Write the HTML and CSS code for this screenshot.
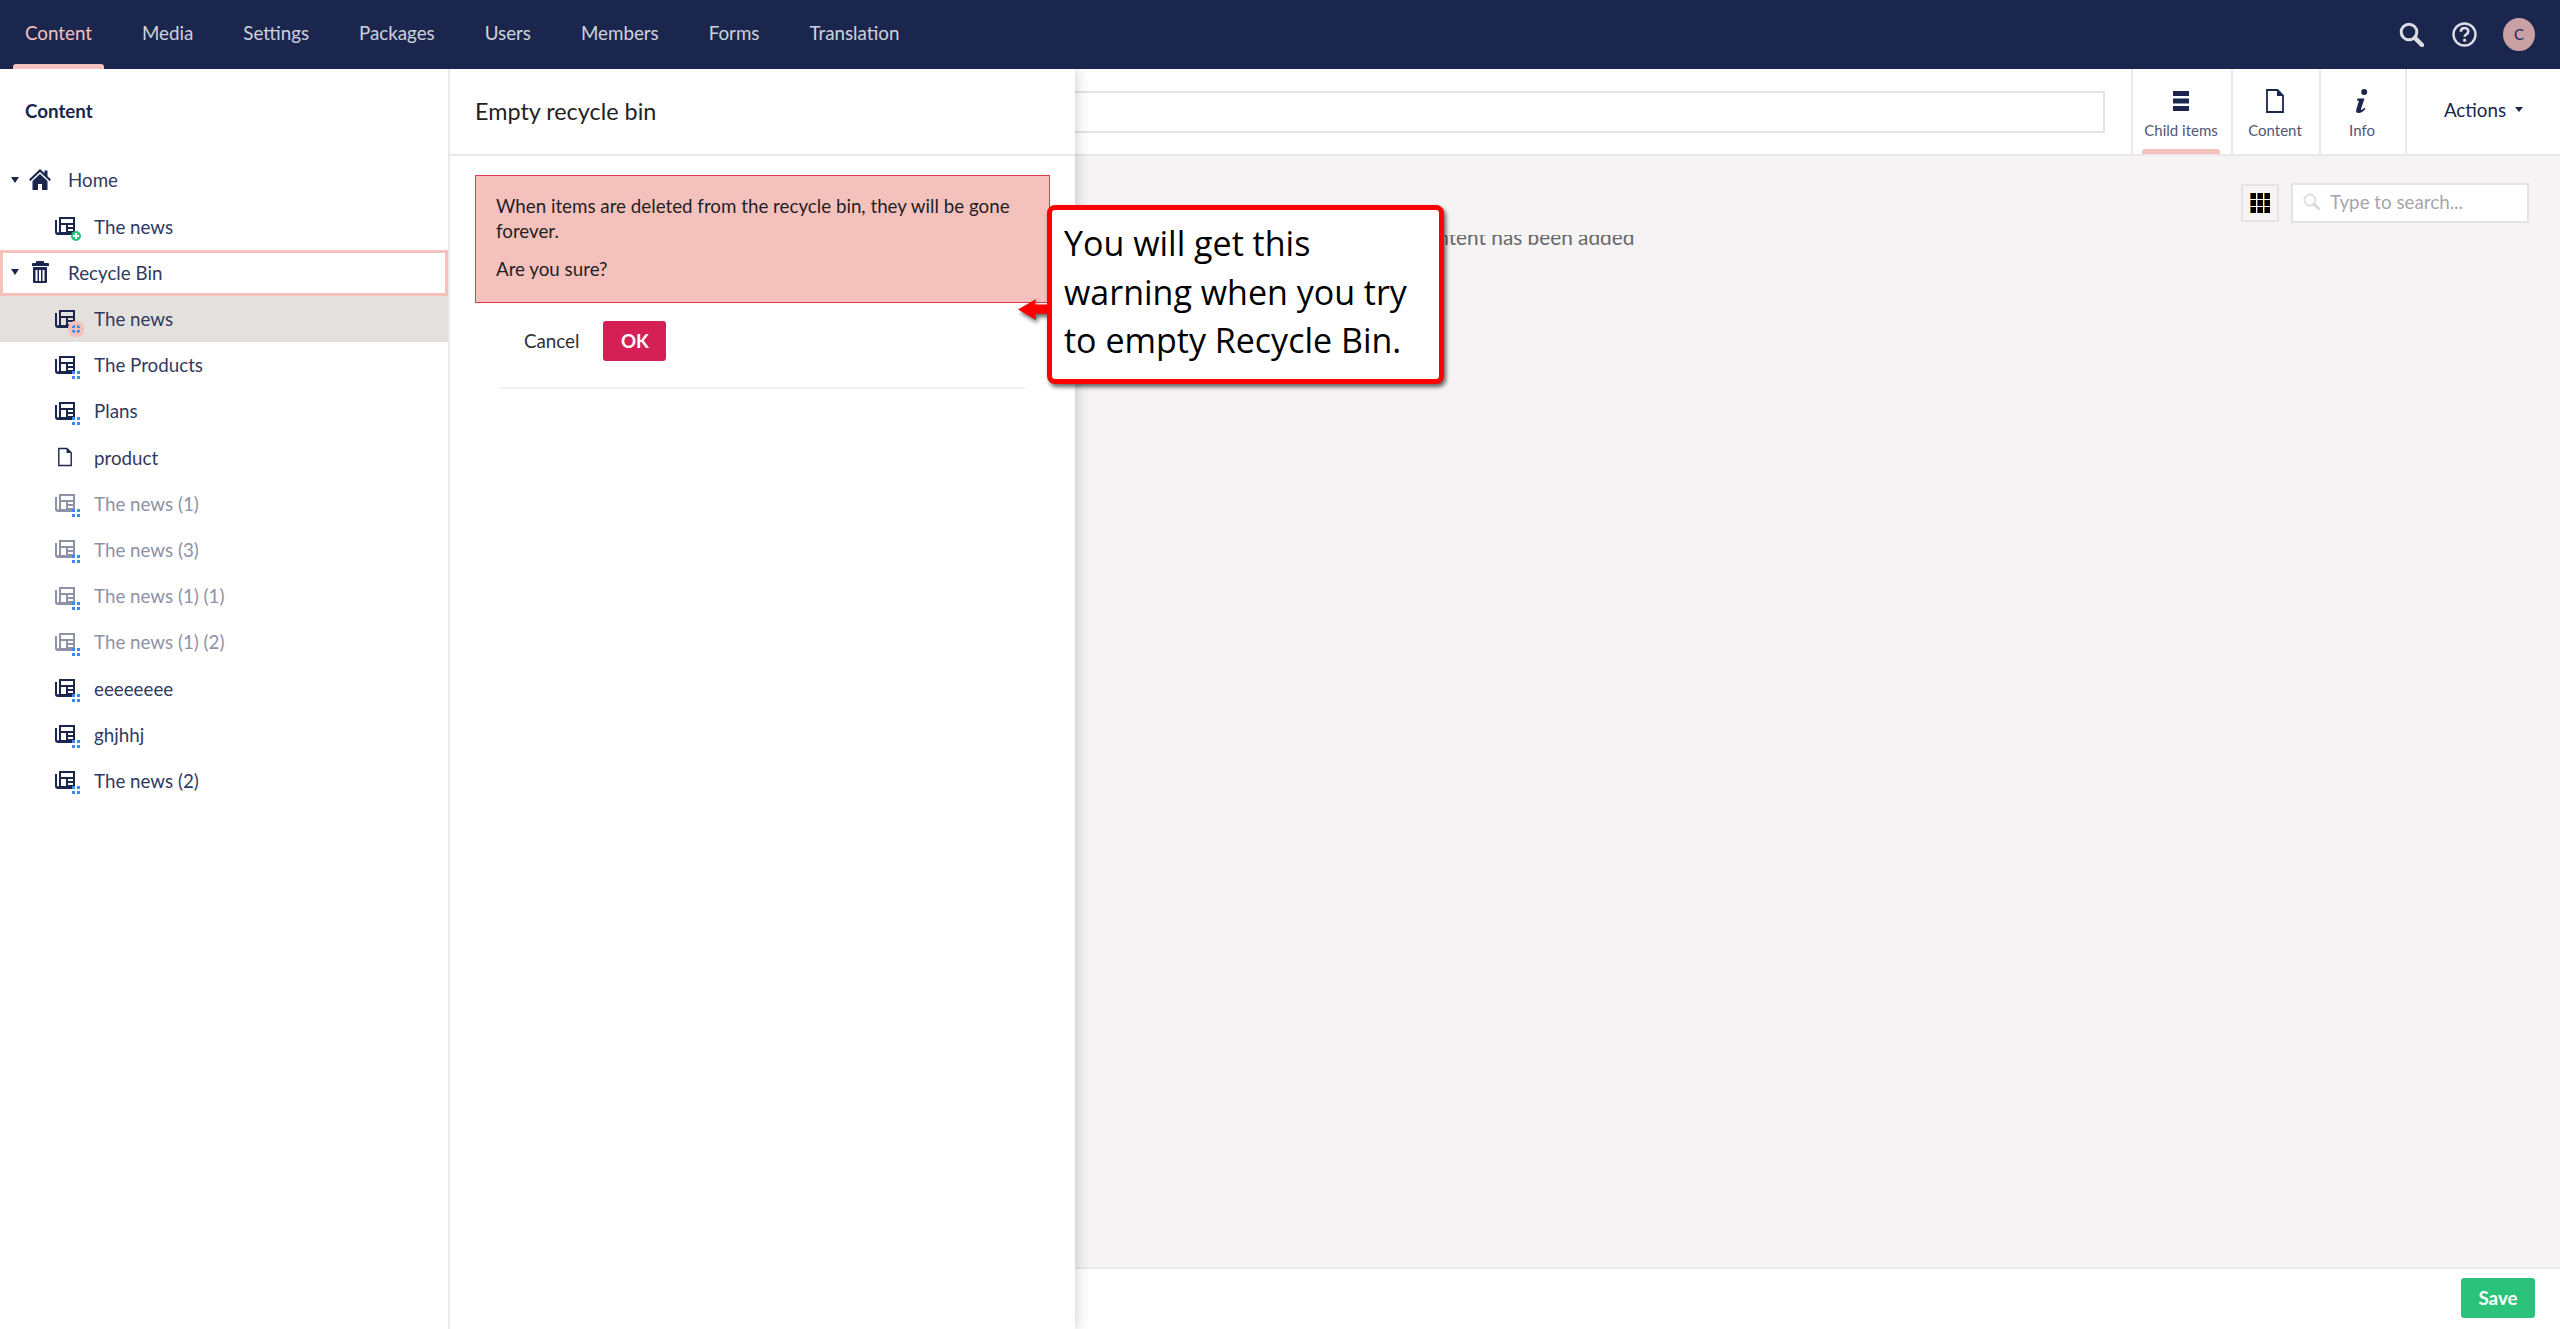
FILE: index.html
```html
<!DOCTYPE html>
<html lang="en">
<head>
    <meta charset="UTF-8">
    <title>Content - Empty recycle bin</title>
    <link rel="stylesheet" href="styles.css">
</head>
<body>
    <svg class="defs" width="0" height="0">
        <defs>
            <symbol id="i-news" viewBox="0 0 20 18">
                <path fill="currentColor" fill-rule="evenodd" d="M4 0h16v14.500a3 3 0 0 1-3 3.500H3a3 3 0 0 1-3-3V3h2v11.500a1 1 0 0 0 2 0zM6 2v4h12V2zM6 8v7h5V8zM13 8v2h5V8zM13 12v2h5v-2z"/>
            </symbol>
            <symbol id="i-doc" viewBox="0 0 18 24">
                <path fill="none" stroke="currentColor" stroke-width="1.800" d="M1 1h10.500L17 6.500V23H1z"/>
                <path fill="currentColor" d="M11 1l6 6h-6z"/>
            </symbol>
        </defs>
    </svg>

    <header class="topbar">
        <nav class="sections">
            <a class="section active">Content</a>
            <a class="section">Media</a>
            <a class="section">Settings</a>
            <a class="section">Packages</a>
            <a class="section">Users</a>
            <a class="section">Members</a>
            <a class="section">Forms</a>
            <a class="section">Translation</a>
        </nav>
        <div class="tools">
            <svg class="tool-search" width="25" height="25" viewBox="0 0 25 25">
                <circle cx="10" cy="10" r="7.800" fill="none" stroke="currentColor" stroke-width="3"/>
                <path d="M16 16l7 7" stroke="currentColor" stroke-width="4.500" stroke-linecap="round"/>
            </svg>
            <svg class="tool-help" width="25" height="25" viewBox="0 0 25 25">
                <circle cx="12.500" cy="12.500" r="11" fill="none" stroke="currentColor" stroke-width="2.400"/>
                <path d="M8.800 9.800c0-5 7.500-5 7.500-.4 0 2.800-3.700 2.800-3.700 5.400" fill="none" stroke="currentColor" stroke-width="2.600"/>
                <circle cx="12.600" cy="18.200" r="1.600" fill="currentColor"/>
            </svg>
            <span class="avatar">C</span>
        </div>
    </header>

    <main class="app">
        <aside class="tree">
            <h3 class="tree-title">Content</h3>
            <ul class="tree-list">
                <li class="node root">
                    <span class="caret"></span>
                    <span class="node-icon">
                        <svg width="22" height="21" viewBox="0 0 22 21"><path fill="currentColor" d="M11 0L0 10.500l1.500 1.600L11 3l9.500 9.100 1.500-1.600-3.500-3.300V1.500h-3v2.800zM11 5L3.500 12v9h5.500v-6h4v6h5.500v-9z"/></svg>
                    </span>
                    Home
                </li>
                <li class="node leaf"><span class="node-icon"><svg class="news"><use href="#i-news"/></svg><span class="badge-add"></span></span>The news</li>
                <li class="node root focused">
                    <span class="caret"></span>
                    <span class="node-icon">
                        <svg width="22" height="22" viewBox="0 0 22 22"><path fill="currentColor" fill-rule="evenodd" d="M8 0h6a1 1 0 0 1 1 1v1h4a1 1 0 0 1 1 1v2H3V3a1 1 0 0 1 1-1h3V1a1 1 0 0 1 1-1zM4 6h14v15a1 1 0 0 1-1 1H5a1 1 0 0 1-1-1zM6.500 9v11h2V9zM10 9v11h2V9zM13.500 9v11h2V9z"/></svg>
                    </span>
                    Recycle Bin
                </li>
                <li class="node leaf selected"><span class="node-icon"><svg class="news"><use href="#i-news"/></svg><span class="badge-grid on-pink"></span></span>The news</li>
                <li class="node leaf"><span class="node-icon"><svg class="news"><use href="#i-news"/></svg><span class="badge-grid"></span></span>The Products</li>
                <li class="node leaf"><span class="node-icon"><svg class="news"><use href="#i-news"/></svg><span class="badge-grid"></span></span>Plans</li>
                <li class="node leaf"><span class="node-icon"><svg class="doc"><use href="#i-doc"/></svg></span>product</li>
                <li class="node leaf unpublished"><span class="node-icon"><svg class="news"><use href="#i-news"/></svg><span class="badge-grid"></span></span>The news (1)</li>
                <li class="node leaf unpublished"><span class="node-icon"><svg class="news"><use href="#i-news"/></svg><span class="badge-grid"></span></span>The news (3)</li>
                <li class="node leaf unpublished"><span class="node-icon"><svg class="news"><use href="#i-news"/></svg><span class="badge-grid"></span></span>The news (1) (1)</li>
                <li class="node leaf unpublished"><span class="node-icon"><svg class="news"><use href="#i-news"/></svg><span class="badge-grid"></span></span>The news (1) (2)</li>
                <li class="node leaf"><span class="node-icon"><svg class="news"><use href="#i-news"/></svg><span class="badge-grid"></span></span>eeeeeeee</li>
                <li class="node leaf"><span class="node-icon"><svg class="news"><use href="#i-news"/></svg><span class="badge-grid"></span></span>ghjhhj</li>
                <li class="node leaf"><span class="node-icon"><svg class="news"><use href="#i-news"/></svg><span class="badge-grid"></span></span>The news (2)</li>
            </ul>
        </aside>

        <section class="dialog">
            <h3 class="dialog-title">Empty recycle bin</h3>
            <div class="dialog-body">
                <div class="alert">
                    <p>When items are deleted from the recycle bin, they will be gone forever.</p>
                    <p>Are you sure?</p>
                </div>
                <div class="dialog-actions">
                    <button class="btn-link">Cancel</button>
                    <button class="btn-danger">OK</button>
                </div>
                <hr class="dialog-rule">
            </div>
        </section>

        <section class="editor">
            <div class="editor-head">
                <div class="name-input"></div>
                <a class="tab active">
                    <span class="tab-icon">
                        <svg width="16" height="20" viewBox="0 0 16 20"><path fill="currentColor" d="M0 0h16v5H0zM0 7.500h16v5H0zM0 15h16v5H0z"/></svg>
                    </span>
                    <span class="tab-label">Child items</span>
                </a>
                <a class="tab tab-content">
                    <span class="tab-icon"><svg width="18" height="24"><use href="#i-doc"/></svg></span>
                    <span class="tab-label">Content</span>
                </a>
                <a class="tab tab-info">
                    <span class="tab-icon">
                        <svg width="12" height="24" viewBox="0 0 12 24"><circle cx="8.200" cy="3" r="3" fill="currentColor"/><path fill="currentColor" d="M1.500 9.500h7L5 20c-.2.800.6 1 1.300.5L8.500 18.700l1 1C7.500 22.500 5 24 2.500 24 .5 24-.3 22.600.3 20.500L3 11.800H1z"/></svg>
                    </span>
                    <span class="tab-label">Info</span>
                </a>
                <a class="actions">Actions<span class="actions-caret"></span></a>
            </div>

            <div class="editor-content">
                <div class="toolbar">
                    <span class="grid-toggle">
                        <svg width="20" height="20" viewBox="0 0 20 20">
                            <defs>
                                <pattern id="cells" width="7" height="7" patternUnits="userSpaceOnUse">
                                    <rect width="6" height="6" fill="#e59a2e"/>
                                    <rect x=".6" width="5.400" height="6" fill="#000"/>
                                </pattern>
                            </defs>
                            <rect width="20" height="20" fill="url(#cells)"/>
                        </svg>
                    </span>
                    <label class="search">
                        <svg width="17" height="17" viewBox="0 0 17 17">
                            <circle cx="7" cy="7" r="5.500" fill="none" stroke="#dcdbdd" stroke-width="1.800"/>
                            <path d="M11 11l5 5" stroke="#d8d7d9" stroke-width="2.800" stroke-linecap="round"/>
                        </svg>
                        Type to search...
                    </label>
                </div>
                <div class="empty-clip"><span class="empty-text">No content has been added</span></div>
            </div>

            <div class="editor-foot">
                <button class="btn-save">Save</button>
            </div>
        </section>

        <svg class="callout-arrow" width="30" height="21" viewBox="0 0 30 21">
            <path fill="#f00" d="M0 10.500L18 0l-1 5.500h13v9.500H17l1 6z"/>
        </svg>
        <div class="callout">You will get this warning when you try to empty Recycle Bin.</div>
    </main>
</body>
</html>
```

FILE: styles.css
```css
* {
    box-sizing: border-box;
}
html, body {
    height: 100%;
}
body {
    margin: 0;
    font-family: Lato, "Open Sans", sans-serif;
    font-size: 18.75px;
    color: #1b264f;
    background-color: #fff;
    overflow: hidden;
    display: flex;
    flex-direction: column;
}
.defs {
    position: absolute;
}

/* top bar */
.topbar {
    height: 69px;
    flex: none;
    display: flex;
    justify-content: space-between;
    background-color: #1b264f;
}
.sections {
    display: flex;
}
.section {
    position: relative;
    padding: 0 25px;
    line-height: 66px;
    color: rgba(255, 255, 255, 0.8);
}
.section.active {
    color: #f5c1bc;
}
.section.active::after {
    content: "";
    position: absolute;
    left: 13px;
    right: 13px;
    bottom: 0;
    height: 5px;
    background-color: #f5c1bc;
    border-radius: 3px 3px 0 0;
}
.tools {
    display: flex;
    align-items: center;
    padding-right: 25px;
    color: #dcdce2;
}
.tool-search {
    margin-right: 28px;
}
.tool-help {
    margin-right: 26px;
}
.avatar {
    width: 32px;
    height: 33px;
    border-radius: 50%;
    background-color: #c9a0a3;
    color: #1b264f;
    font-size: 15px;
    line-height: 33px;
    text-align: center;
}

/* main columns */
.app {
    position: relative;
    flex: 1;
    min-height: 0;
    display: flex;
}

/* tree */
.tree {
    width: 450px;
    flex: none;
    border-right: 2px solid #e9e9eb;
}
.tree-title {
    margin: 0 0 4.6px;
    height: 84px;
    padding-left: 25px;
    font-size: 18.75px;
    line-height: 84px;
    font-weight: 700;
}
.tree-list {
    list-style: none;
    margin: 0;
    padding: 0;
}
.node {
    height: 46.2px;
    padding-bottom: 1.5px;
    display: flex;
    align-items: center;
    color: #303a5f;
}
.root {
    padding-left: 11px;
}
.leaf {
    padding-left: 55px;
}
.caret {
    width: 0;
    height: 0;
    margin-right: 10px;
    border-left: 4.5px solid transparent;
    border-right: 4.5px solid transparent;
    border-top: 6px solid #1b264f;
}
.node-icon {
    position: relative;
    width: 22px;
    height: 22px;
    flex: none;
    display: flex;
    align-items: center;
    color: #1b264f;
    margin-right: 17px;
}
.news {
    width: 20px;
    height: 18px;
}
.doc {
    width: 14px;
    height: 20px;
    margin-left: 3px;
}
.focused {
    box-shadow: inset 0 0 0 3px #f5c1bc;
}
.selected {
    background-color: #e4e0dd;
}
.unpublished {
    color: #8d92a7;
}
.unpublished .node-icon {
    color: #8d92a7;
}
.badge-add {
    position: absolute;
    left: 16px;
    top: 16px;
    width: 10px;
    height: 10px;
    border-radius: 50%;
    background:
        linear-gradient(#fff, #fff) center / 6px 2px no-repeat,
        linear-gradient(#fff, #fff) center / 2px 6px no-repeat,
        #2bc37c;
}
.badge-grid {
    position: absolute;
    left: 17px;
    top: 17px;
    width: 8px;
    height: 8px;
    background:
        linear-gradient(#3b8bee, #3b8bee) 0 0 / 3px 3px no-repeat,
        linear-gradient(#3b8bee, #3b8bee) 100% 0 / 3px 3px no-repeat,
        linear-gradient(#3b8bee, #3b8bee) 0 100% / 3px 3px no-repeat,
        linear-gradient(#3b8bee, #3b8bee) 100% 100% / 3px 3px no-repeat;
}
.on-pink {
    box-shadow: 0 0 0 4px #f5c1bc;
    border-radius: 3px;
    background-color: #f5c1bc;
}

/* dialog */
.dialog {
    position: relative;
    z-index: 2;
    width: 625px;
    flex: none;
    background-color: #fff;
    box-shadow: 0 0 14px rgba(0, 0, 0, 0.22);
    clip-path: inset(0 -20px 0 0);
}
.dialog-title {
    margin: 0;
    height: 87px;
    padding-left: 25px;
    font-size: 23.4px;
    font-weight: 400;
    line-height: 85px;
    color: #1f1f24;
    border-bottom: 2px solid #e9e9eb;
}
.dialog-body {
    padding: 19px 25px 0;
}
.alert {
    padding: 17px 20px 21px;
    background-color: #f5c1bc;
    border: 1px solid #e2394f;
    color: #1f1f24;
    line-height: 25px;
}
.alert p {
    margin: 0 0 13px;
}
.alert p:last-child {
    margin-bottom: 0;
}
.dialog-actions {
    display: flex;
    align-items: center;
    margin-top: 18px;
    padding-left: 49px;
}
.btn-link {
    padding: 0 0 2px;
    margin-right: 24px;
    border: none;
    background: none;
    font: inherit;
    color: #303033;
}
.btn-danger {
    width: 63px;
    height: 40px;
    padding: 0 0 2px;
    border: none;
    border-radius: 3px;
    background-color: #d42054;
    color: #fff;
    font: inherit;
    font-weight: 700;
}
.dialog-rule {
    margin: 26px 25px 0;
    height: 2px;
    border: none;
    background-color: #f1f0f1;
}

/* editor behind the dialog */
.editor {
    flex: 1;
    min-width: 0;
    display: flex;
    flex-direction: column;
}
.editor-head {
    height: 87px;
    flex: none;
    display: flex;
    align-items: stretch;
    background-color: #fff;
    border-bottom: 2px solid #e9e9eb;
}
.name-input {
    flex: 1;
    height: 42px;
    margin: 22px 26px 0 0;
    border: 2px solid #e3e2e4;
    border-left: none;
}
.tab {
    position: relative;
    width: 100px;
    display: flex;
    flex-direction: column;
    align-items: center;
    padding: 19px 2px 0 0;
    border-left: 2px solid #e9e9eb;
}
.tab-content {
    width: 88px;
}
.tab-info {
    width: 86px;
}
.tab-icon {
    height: 26px;
    display: flex;
    align-items: center;
    justify-content: center;
}
.tab-label {
    margin-top: 6px;
    font-size: 15px;
    line-height: 20px;
    color: #515671;
}
.tab.active::after {
    content: "";
    position: absolute;
    left: 9px;
    right: 11px;
    bottom: 0;
    height: 5px;
    background-color: #f5c1bc;
    border-radius: 3px 3px 0 0;
}
.actions {
    width: 155px;
    display: flex;
    align-items: center;
    justify-content: center;
    padding-bottom: 4px;
    border-left: 2px solid #e9e9eb;
}
.actions-caret {
    width: 0;
    height: 0;
    margin-left: 9px;
    border-left: 4.5px solid transparent;
    border-right: 4.5px solid transparent;
    border-top: 5px solid #1b264f;
}
.editor-content {
    flex: 1;
    background-color: #f5f3f4;
}
.toolbar {
    display: flex;
    justify-content: flex-end;
    align-items: center;
    padding: 27px 31px 0 0;
}
.grid-toggle {
    width: 38px;
    height: 38px;
    margin-right: 12px;
    display: flex;
    align-items: center;
    justify-content: center;
    border: 2px solid #e3e2e4;
}
.search {
    width: 238px;
    height: 40px;
    display: flex;
    align-items: center;
    gap: 10px;
    padding: 0 0 3px 10px;
    background-color: #fff;
    border: 2px solid #e3e2e4;
    color: #a6a5aa;
}
/* only the lower part of this line shows in the reference */
.empty-clip {
    height: 13px;
    margin-top: 12px;
    margin-left: 308px;
    overflow: hidden;
    white-space: nowrap;
}
.empty-text {
    display: block;
    margin-top: -9px;
    font-size: 20.8px;
    line-height: 22px;
    color: #68676b;
}
.editor-foot {
    height: 62px;
    flex: none;
    display: flex;
    justify-content: flex-end;
    padding: 9px 25px 0 0;
    background-color: #fff;
    border-top: 2px solid #e9e9eb;
}
.btn-save {
    width: 74px;
    height: 40px;
    padding: 0 0 2px;
    border: none;
    border-radius: 3px;
    background-color: #2bc37c;
    color: #fff;
    font: inherit;
    font-weight: 700;
}

/* annotation drawn over the screenshot */
.callout {
    position: absolute;
    z-index: 3;
    left: 1047px;
    top: 136px;
    width: 397px;
    height: 179px;
    padding: 9px 11px 0 12px;
    background-color: #fff;
    border: 5px solid #f00;
    border-radius: 8px;
    box-shadow: 2px 3px 4px rgba(0, 0, 0, 0.6);
    font-family: "Open Sans", sans-serif;
    font-size: 34px;
    line-height: 48.5px;
    color: #000;
}
.callout-arrow {
    position: absolute;
    z-index: 3;
    left: 1018px;
    top: 230px;
    filter: drop-shadow(2px 3px 2px rgba(0, 0, 0, 0.6));
}
```
